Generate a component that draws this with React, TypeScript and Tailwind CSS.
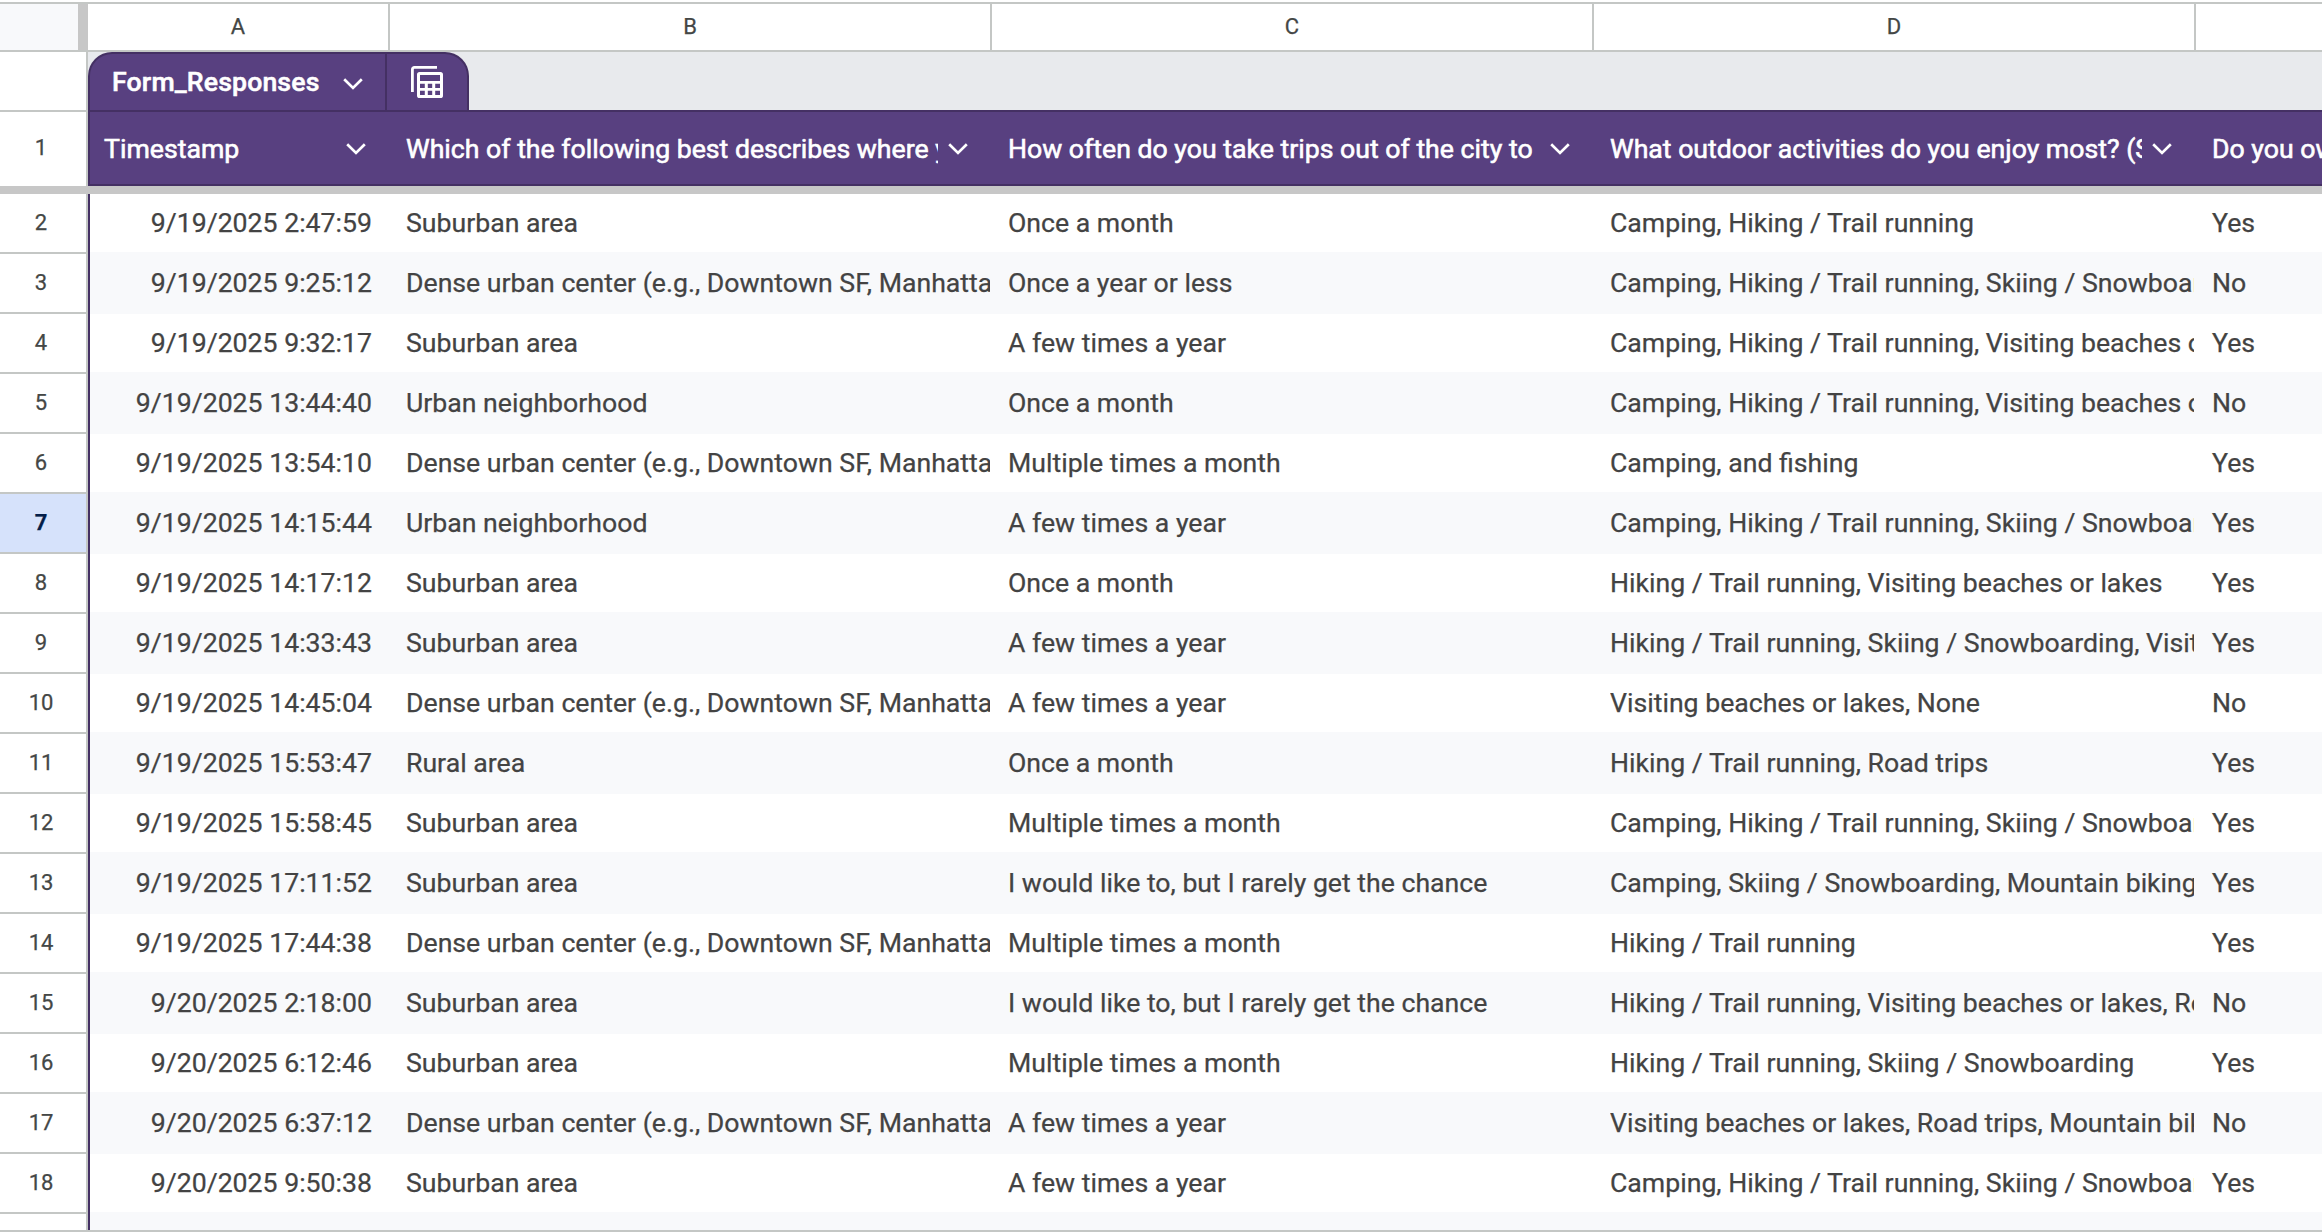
import React from "react";

type Row = [string, string, string, string, string];

const DENSE = "Dense urban center (e.g., Downtown SF, Manhattan)";
const SUB = "Suburban area";
const FEW = "A few times a year";
const MULTI = "Multiple times a month";
const RARE = "I would like to, but I rarely get the chance";

const rows: Row[] = [
  ["9/19/2025 2:47:59", SUB, "Once a month", "Camping, Hiking / Trail running", "Yes"],
  ["9/19/2025 9:25:12", DENSE, "Once a year or less", "Camping, Hiking / Trail running, Skiing / Snowboarding", "No"],
  ["9/19/2025 9:32:17", SUB, FEW, "Camping, Hiking / Trail running, Visiting beaches or lakes", "Yes"],
  ["9/19/2025 13:44:40", "Urban neighborhood", "Once a month", "Camping, Hiking / Trail running, Visiting beaches or lakes", "No"],
  ["9/19/2025 13:54:10", DENSE, MULTI, "Camping, and fishing", "Yes"],
  ["9/19/2025 14:15:44", "Urban neighborhood", FEW, "Camping, Hiking / Trail running, Skiing / Snowboarding", "Yes"],
  ["9/19/2025 14:17:12", SUB, "Once a month", "Hiking / Trail running, Visiting beaches or lakes", "Yes"],
  ["9/19/2025 14:33:43", SUB, FEW, "Hiking / Trail running, Skiing / Snowboarding, Visiting beaches", "Yes"],
  ["9/19/2025 14:45:04", DENSE, FEW, "Visiting beaches or lakes, None", "No"],
  ["9/19/2025 15:53:47", "Rural area", "Once a month", "Hiking / Trail running, Road trips", "Yes"],
  ["9/19/2025 15:58:45", SUB, MULTI, "Camping, Hiking / Trail running, Skiing / Snowboarding", "Yes"],
  ["9/19/2025 17:11:52", SUB, RARE, "Camping, Skiing / Snowboarding, Mountain biking", "Yes"],
  ["9/19/2025 17:44:38", DENSE, MULTI, "Hiking / Trail running", "Yes"],
  ["9/20/2025 2:18:00", SUB, RARE, "Hiking / Trail running, Visiting beaches or lakes, Road trips", "No"],
  ["9/20/2025 6:12:46", SUB, MULTI, "Hiking / Trail running, Skiing / Snowboarding", "Yes"],
  ["9/20/2025 6:37:12", DENSE, FEW, "Visiting beaches or lakes, Road trips, Mountain biking", "No"],
  ["9/20/2025 9:50:38", SUB, FEW, "Camping, Hiking / Trail running, Skiing / Snowboarding", "Yes"],
];

const headers = [
  "Which of the following best describes where you live?",
  "How often do you take trips out of the city to",
  "What outdoor activities do you enjoy most? (Select all)",
];

function Chevron() {
  return (
    <svg width="20" height="12" viewBox="0 0 20 12" fill="none" className="block shrink-0">
      <path d="M1.2 1.2 L10 9.9 L18.8 1.2" stroke="#fff" strokeWidth="2.7" />
    </svg>
  );
}

function TableIcon() {
  return (
    <svg width="32" height="32" viewBox="0 0 32 32" fill="none" className="block">
      <path d="M1.4 26V3.4a2 2 0 0 1 2-2H26" stroke="#fff" strokeWidth="2.8" />
      <path
        fill="#fff"
        fillRule="evenodd"
        d="M8.6 6H29.4A2.6 2.6 0 0 1 32 8.6V29.4A2.6 2.6 0 0 1 29.4 32H8.6A2.6 2.6 0 0 1 6 29.4V8.6A2.6 2.6 0 0 1 8.6 6ZM9 9V15H29V9ZM9 17.8V22H13.8V17.8ZM16.8 17.8V22H21.2V17.8ZM24.2 17.8V22H29V17.8ZM9 24.8V29H13.8V24.8ZM16.8 24.8V29H21.2V24.8ZM24.2 24.8V29H29V24.8Z"
      />
    </svg>
  );
}

function RowNumber({ n }: { n: number }) {
  const selected = n === 7;
  return (
    <div
      className={
        "flex h-[60px] w-[88px] shrink-0 items-center justify-center border-r-2 border-b-2 border-[#c4c7c5] pr-[4px] pb-[1px] text-[22px] leading-none " +
        (selected ? "bg-[#d6e2fb] font-bold text-[#041e49]" : "bg-white text-[#444746]")
      }
    >
      {n}
    </div>
  );
}

export default function App() {
  return (
    <div
      className="flex h-[1232px] w-[2322px] flex-col overflow-hidden bg-white text-[26.667px] leading-none text-[#434343] [-webkit-text-stroke:0.25px]"
      style={{ fontFamily: "Roboto, sans-serif" }}
    >
      {/* Column letters */}
      <div className="mt-[2px] flex h-[50px] shrink-0 border-y-2 border-[#c4c7c5] text-[22px] text-[#444746]">
        <div className="w-[88px] shrink-0 border-r-[10px] border-[#c7c7c7] bg-[#f8f9fb]" />
        <div className="flex w-[302px] shrink-0 items-center justify-center border-r-2 border-[#c4c7c5]">A</div>
        {["B", "C", "D"].map((c) => (
          <div key={c} className="flex w-[602px] shrink-0 items-center justify-center border-r-2 border-[#c4c7c5]">
            {c}
          </div>
        ))}
      </div>

      {/* Table title strip */}
      <div className="flex h-[58px] shrink-0 bg-[#e8eaed]">
        <div className="w-[88px] shrink-0 border-r-2 border-[#c4c7c5] bg-white" />
        <div className="flex h-[58px] w-[381px] rounded-t-[24px] border-2 border-b-0 border-[#443063] bg-[#584080]">
          <div className="flex w-[297px] items-center justify-between border-r-2 border-[#443063] pr-[22px] pl-[22px]">
            <span className="font-medium tracking-[0.14px] whitespace-nowrap text-white [-webkit-text-stroke:0.5px]">
              Form_Responses
            </span>
            <div className="pt-[4px]">
              <Chevron />
            </div>
          </div>
          <div className="flex flex-1 items-start pt-[12px] pl-[24px]">
            <TableIcon />
          </div>
        </div>
      </div>

      {/* Header row */}
      <div className="flex h-[76px] shrink-0">
        <div className="flex h-[76px] w-[88px] shrink-0 items-center justify-center border-t-2 border-r-2 border-[#c4c7c5] pr-[4px] pb-[2px] text-[22px] text-[#444746]">
          1
        </div>
        <div className="flex w-[2234px] border-y-2 border-l-2 border-[#443063] bg-[#584080] whitespace-nowrap text-white [-webkit-text-stroke:0.6px]">
          <div className="flex w-[300px] shrink-0 items-center justify-between pr-[24px] pl-[14px]">
            <span className="pt-[2px]">Timestamp</span>
            <div className="pt-[2px]">
              <Chevron />
            </div>
          </div>
          {headers.map((h) => (
            <div key={h} className="flex w-[602px] shrink-0 items-center pt-[2px] pr-[24px] pl-4">
              <div className="w-[532px] shrink-0 overflow-hidden py-2">{h}</div>
              <div className="pl-[10px]">
                <Chevron />
              </div>
            </div>
          ))}
          <div className="flex flex-1 items-center overflow-hidden pt-[2px] pl-4">Do you own a car?</div>
        </div>
      </div>

      {/* Frozen row divider */}
      <div className="flex h-[8px] shrink-0 bg-[#c7c7c7]" />

      {/* Body */}
      <div className="flex h-[1036px] shrink-0 overflow-hidden">
        <div className="flex w-[88px] shrink-0 flex-col">
          {rows.map((_, i) => (
            <RowNumber key={i} n={i + 2} />
          ))}
          <div className="h-[16px] border-r-2 border-[#c4c7c5]" />
        </div>
        <div className="flex w-[2234px] flex-col border-l-2 border-[#443063]">
          {rows.map((r, i) => (
            <div
              key={i}
              className={
                "flex shrink-0 items-center whitespace-nowrap " +
                (i % 2 === 1 ? "h-[62px] bg-[#f8f9fb]" : "h-[58px] bg-white")
              }
            >
              <div className="w-[300px] shrink-0 pr-[18px] text-right">{r[0]}</div>
              {[r[1], r[2], r[3]].map((t, j) => (
                <div key={j} className="w-[602px] shrink-0 pr-[2px] pl-4">
                  <div className="overflow-hidden py-2">{t}</div>
                </div>
              ))}
              <div className="flex-1 pl-4">{r[4]}</div>
            </div>
          ))}
          <div className="h-[18px] shrink-0 bg-[#f8f9fb]" />
        </div>
      </div>
      <div className="h-[2px] shrink-0 bg-[#c4c7c5]" />
    </div>
  );
}
